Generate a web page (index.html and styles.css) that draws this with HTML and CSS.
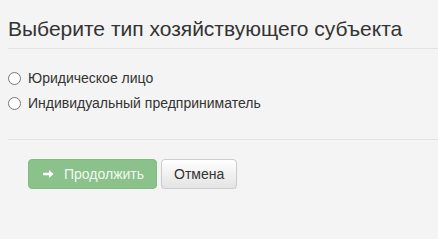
FILE: index.html
```html
<!DOCTYPE html>
<html lang="ru">
<head>
    <meta charset="UTF-8">
    <meta name="viewport" content="width=device-width, initial-scale=1.0">
    <title>Тип субъекта</title>
    <link rel="stylesheet" href="styles.css">
</head>
<body>
	<div class="dialog">
		<div class="dialogHeader">
			<h4 class="title">Выберите тип хозяйствующего субъекта</h4>
		</div>
		<div class="dialogBody">
			<label class="radio">
				<input type="radio" name="kind" value="legal" />
				<span>Юридическое лицо</span>
			</label>
			<label class="radio">
				<input type="radio" name="kind" value="ip" />
				<span>Индивидуальный предприниматель</span>
			</label>
		</div>
		<div class="dialogFooter">
			<button type="button" class="btn btnSuccess" disabled>
				<svg class="icon" width="11" height="10" viewBox="0 0 11 10">
					<path d="M0 3.8h6V1l4.6 4L6 9V6.2H0z" fill="#fff"/>
				</svg>
				Продолжить
			</button>
			<button type="button" class="btn btnDefault">Отмена</button>
		</div>
	</div>
</body>
</html>
```

FILE: styles.css
```css
body {
  margin: 0;
  background: #f4f4f4;
  font-family: "Liberation Sans", Arial, sans-serif;
  color: #333;
}
.dialogHeader {
  margin-left: 8px;
  padding: 17px 0 8px;
  border-bottom: 1px solid #e3e3e3;
}
.title {
  margin: 0;
  font-size: 21px;
  font-weight: normal;
  line-height: 23px;
}
.dialogBody {
  margin-left: 8px;
  padding: 19px 0 26px;
  display: flex;
  flex-direction: column;
  gap: 5px;
  border-bottom: 1px solid #e3e3e3;
}
.radio {
  display: flex;
  align-items: center;
  height: 20px;
  font-size: 14px;
}
.radio input {
  margin: 0 7px 0 0;
  width: 13px;
  height: 13px;
}
.dialogFooter {
  padding: 19px 0 0 28px;
  display: flex;
  gap: 4px;
}
.btn {
  height: 30px;
  padding: 0 12px;
  font-family: inherit;
  font-size: 14px;
  border-radius: 4px;
  display: flex;
  align-items: center;
}
.btnSuccess {
  background: #8bc18b;
  border: 1px solid #82bb82;
  color: rgba(255, 255, 255, .92);
  opacity: 1;
}
.icon {
  margin: 0 10px 0 2px;
}
.btnDefault {
  background: linear-gradient(#fff, #e3e3e3);
  border: 1px solid #ccc;
  color: #333;
  box-shadow: 0 1px 1px rgba(0, 0, 0, .08);
}
```
